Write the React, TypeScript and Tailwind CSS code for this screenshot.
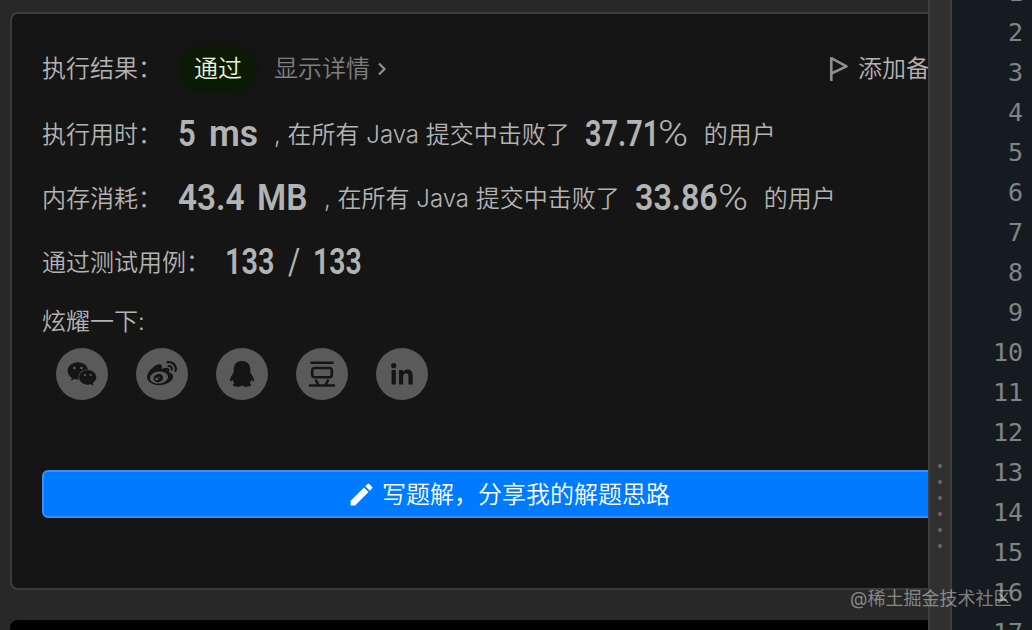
import type { ReactNode } from 'react'
import { FaWeibo, FaWeixin } from 'react-icons/fa'
import { MdEdit } from 'react-icons/md'

const LINE_COUNT = 17

// Condensed figure text: box keeps the final width, inner span is squeezed
function Figure({ width, scale, children }: { width: string; scale: string; children: ReactNode }) {
    return (
        <span className={`inline-block shrink-0 mb-0.5 whitespace-nowrap font-['Roboto',sans-serif] text-[37px] leading-[40px] ${width}`}>
            <span className={`inline-block origin-left ${scale}`}>{children}</span>
        </span>
    )
}

function Percent() {
    return (
        <Figure width="w-[30px]" scale="scale-x-[1.1]">
            <span className="font-light">%</span>
        </Figure>
    )
}

function QqIcon() {
    return (
        <svg viewBox="0 0 28 28" className="w-7 h-7" fill="currentColor">
            <path d="M14 .9c-5 0-8.3 3.5-8.3 8.2v2.4c0 1-.6 1.8-1.4 3.1-1.4 2.3-2.5 4.4-2.3 6.1.1.9.7 1 1.3.5.5-.4.9-1 1.3-1.5.4 1.5 1 2.6 1.9 3.6-1.2.4-1.8 1-1.6 1.8.2 1.1 2 1.7 4.3 1.7 2 0 3.6-.5 4.3-1.3h1c.7.8 2.3 1.3 4.3 1.3 2.3 0 4.1-.6 4.3-1.7.2-.8-.4-1.4-1.6-1.8.9-1 1.5-2.1 1.9-3.6.4.5.8 1.1 1.3 1.5.6.5 1.2.4 1.3-.5.2-1.7-.9-3.8-2.3-6.1-.8-1.3-1.4-2.1-1.4-3.1V9.1C22.3 4.4 19 .9 14 .9z" />
        </svg>
    )
}

function DoubanIcon() {
    return (
        <svg viewBox="0 0 28 28" className="w-7 h-7" fill="none" stroke="currentColor" strokeWidth="2.6" strokeLinecap="round">
            <path d="M3.5 2.7h21M2 25.5h24M8.2 20.5l1.9 4M19.8 20.5l-1.9 4" />
            <rect x="4.2" y="8" width="19.6" height="9.3" rx="2.6" />
        </svg>
    )
}

function LinkedinIcon() {
    return (
        <svg viewBox="0 0 22 22" className="w-[22px] h-[22px]" fill="currentColor">
            <circle cx="2.7" cy="2.7" r="2.6" />
            <path d="M.6 7h4.2v14.6H.6zM8 7h4v2c.8-1.4 2.3-2.4 4.3-2.4 3.9 0 5.4 2.3 5.4 6.3v8.7h-4.2v-8c0-2-.5-3.4-2.4-3.4-2 0-2.9 1.4-2.9 3.4v8H8z" />
        </svg>
    )
}

function ShareButton({ children }: { children: ReactNode }) {
    return (
        <button className="w-[52px] h-[52px] rounded-full bg-[#5a5a5a] text-[#151515] flex items-center justify-center">
            {children}
        </button>
    )
}

function ResultPanel() {
    return (
        <div className="w-[1000px] h-[578px] shrink-0 rounded-lg border-2 border-[#3b3b3b] bg-[#151515] px-[30px] pt-[30px] text-2xl leading-9 text-[#b3b3b3]">
            <div className="flex items-center h-[50px]">
                <span className="w-[136px]">执行结果：</span>
                <span className="w-[68px] h-[36px] ml-1.5 rounded-full bg-[#0a1a05] shadow-[0_0_5px_5px_#0a1a05] text-[#e5f5dc] flex items-center justify-center">通过</span>
                <span className="ml-[22px] text-[#808080]">显示详情</span>
                <svg viewBox="0 0 10 14" className="ml-[7px] w-[10px] h-[14px]" fill="none" stroke="#8f8f8f" strokeWidth="2.2">
                    <path d="M2 1.5 7.5 7 2 12.5" />
                </svg>
                <span className="ml-[442px] flex items-center gap-[9px] shrink-0 whitespace-nowrap">
                    <svg viewBox="0 0 20 26" className="w-5 h-[26px]" fill="none" stroke="#8f8f8f" strokeWidth="2.6" strokeLinejoin="round">
                        <path d="M2.3 25V2.2L17.5 10.3 2.3 17.5" />
                    </svg>
                    添加备注
                </span>
            </div>

            <div className="flex items-center h-16 mt-[9px]">
                <span className="w-[136px]">执行用时：</span>
                <Figure width="w-[31px]" scale="scale-x-[0.84]"><span className="font-semibold">5</span></Figure>
                <Figure width="w-[65px]" scale="scale-x-[0.96]"><span className="font-semibold">ms</span></Figure>
                <span className="whitespace-pre">, 在所有 Java 提交中击败了</span>
                <Figure width="w-[73px] ml-[15px]" scale="scale-x-[0.78]"><span className="font-semibold">37.71</span></Figure>
                <Percent />
                <span className="ml-4">的用户</span>
            </div>

            <div className="flex items-center h-16">
                <span className="w-[136px]">内存消耗：</span>
                <Figure width="w-[79px]" scale="scale-x-[0.9]"><span className="font-semibold">43.4</span></Figure>
                <Figure width="w-[67px]" scale="scale-x-[0.9]"><span className="font-semibold">MB</span></Figure>
                <span className="whitespace-pre">, 在所有 Java 提交中击败了</span>
                <Figure width="w-[83px] ml-[15px]" scale="scale-x-[0.87]"><span className="font-semibold">33.86</span></Figure>
                <Percent />
                <span className="ml-4">的用户</span>
            </div>

            <div className="flex items-center h-16">
                <span className="w-[183px]">通过测试用例：</span>
                <Figure width="w-[63px]" scale="scale-x-[0.78]"><span className="font-semibold">133</span></Figure>
                <Figure width="w-[25px]" scale="scale-x-[0.8]"><span className="font-normal">/</span></Figure>
                <Figure width="w-[62px]" scale="scale-x-[0.77]"><span className="font-semibold">133</span></Figure>
            </div>

            <div className="mt-[9px]">炫耀一下:</div>

            <div className="flex gap-7 mt-2 ml-3.5">
                <ShareButton><FaWeixin className="w-[30px] h-[30px]" /></ShareButton>
                <ShareButton><FaWeibo className="w-[30px] h-[30px]" /></ShareButton>
                <ShareButton><QqIcon /></ShareButton>
                <ShareButton><DoubanIcon /></ShareButton>
                <ShareButton><LinkedinIcon /></ShareButton>
            </div>

            <button className="mt-[70px] w-[936px] h-12 rounded-md border-2 border-[#3c8df5] bg-[#007aff] text-white flex items-center justify-center gap-1.5 pt-0.5 pr-[3px]">
                <MdEdit className="w-[29px] h-[29px] mb-0.5" />
                写题解，分享我的解题思路
            </button>
        </div>
    )
}

function Splitter() {
    return (
        <div className="w-6 shrink-0 border-x-2 border-[#3d3d3d] bg-[#303030]">
            <div className="mt-[464px] flex flex-col items-center gap-3">
                {Array.from({ length: 6 }, (_, i) => (
                    <span key={i} className="w-1 h-1 rounded-full bg-[#686868]" />
                ))}
            </div>
        </div>
    )
}

function LineNumbers() {
    return (
        <div className="flex-1 overflow-hidden bg-[#161b1f] pr-[9px] text-right font-['DejaVu_Sans_Mono',monospace] text-[25px] leading-10 text-[#7f8488]">
            <div className="-mt-[27px]">
                {Array.from({ length: LINE_COUNT }, (_, i) => (
                    <div key={i}>{i + 1}</div>
                ))}
            </div>
        </div>
    )
}

export default function App() {
    return (
        <div className="relative flex w-[1032px] h-[630px] overflow-hidden bg-[#282828] font-[350] font-['Inter','Noto_Sans_CJK_SC',sans-serif]">
            <main className="w-[928px] shrink-0 overflow-hidden pl-2.5 pt-3 flex flex-col">
                <ResultPanel />
                <div className="mt-[30px] h-10 w-[1000px] shrink-0 rounded-lg bg-black" />
            </main>
            <Splitter />
            <LineNumbers />
            <div className="absolute left-[850px] top-[587px] whitespace-nowrap text-lg leading-6 font-normal text-white/45">@稀土掘金技术社区</div>
        </div>
    )
}
